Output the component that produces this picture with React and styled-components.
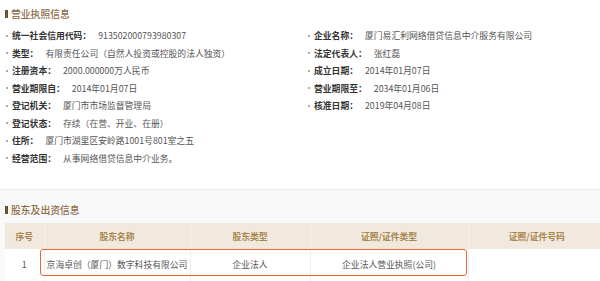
import React from "react";
import styled, { createGlobalStyle } from "styled-components";

const Global = createGlobalStyle`
  html, body { margin: 0; padding: 0; background: #fff; }
  body { font-family: "Noto Sans CJK SC", "Noto Sans", sans-serif; width: 600px; height: 281px; overflow: hidden; }
`;

const Page = styled.div`
  width: 600px;
  height: 281px;
  overflow: hidden;
`;

const License = styled.section`
  height: 190px;
  background: #fff;
  border-bottom: 1px solid #ececec;
  box-sizing: border-box;
  padding-top: 7px;
`;

const Title = styled.h2`
  margin: 0 0 0 5px;
  display: flex;
  align-items: center;
  gap: 3px;
  font-size: 9.8px;
  line-height: 14px;
  font-weight: 500;
  color: #8d6a48;
  &::before {
    content: "";
    width: 3px;
    height: 8px;
    background: #6e4f30;
  }
`;

const InfoGrid = styled.div`
  display: grid;
  grid-template-columns: 302px 298px;
  margin-top: 6px;
  padding-left: 6px;
`;

const Col = styled.div`
  display: flex;
  flex-direction: column;
`;

const Item = styled.div`
  display: flex;
  align-items: center;
  height: 17.5px;
  font-size: 8.8px;
  white-space: nowrap;
  &::before {
    content: "";
    width: 1.6px;
    height: 1.6px;
    border-radius: 50%;
    background: #9a9a9a;
    margin-right: 4.4px;
  }
`;

const Label = styled.span`
  font-weight: 700;
  color: #333;
  margin-right: 7px;
`;

const Value = styled.span`
  color: #555;
`;

const Holders = styled.section`
  background: #f9f9f9;
  padding-top: 13px;
  height: 91px;
  box-sizing: border-box;
`;

const TableWrap = styled.div`
  position: relative;
  margin: 6px 0 0 5px;
  width: 600px;
`;

const Table = styled.table`
  border-collapse: collapse;
  table-layout: fixed;
  width: 600px;
  font-size: 8.8px;
`;

const Th = styled.th`
  height: 26px;
  padding: 0;
  background: #f1e9dd;
  color: #a8874f;
  font-weight: 700;
  text-align: center;
  border-right: 1px solid #f8f3ec;
  &:last-child { border-right: none; }
`;

const Td = styled.td`
  height: 30px;
  padding: 0 0 3px;
  background: #fff;
  color: #555;
  text-align: center;
  border-right: 1px solid #efefef;
  &:last-child { border-right: none; }
`;

const Highlight = styled.div`
  position: absolute;
  left: 35px;
  top: 26px;
  width: 427px;
  height: 27px;
  box-sizing: border-box;
  border: 1.6px solid #e5683f;
  border-radius: 3px;
  pointer-events: none;
`;

const left = [
  ["统一社会信用代码：", "913502000793980307"],
  ["类型：", "有限责任公司（自然人投资或控股的法人独资）"],
  ["注册资本：", "2000.000000万人民币"],
  ["营业期限自：", "2014年01月07日"],
  ["登记机关：", "厦门市市场监督管理局"],
  ["登记状态：", "存续（在营、开业、在册）"],
  ["住所：", "厦门市湖里区安岭路1001号801室之五"],
  ["经营范围：", "从事网络借贷信息中介业务。"],
];

const right = [
  ["企业名称：", "厦门易汇利网络借贷信息中介服务有限公司"],
  ["法定代表人：", "张红磊"],
  ["成立日期：", "2014年01月07日"],
  ["营业期限至：", "2034年01月06日"],
  ["核准日期：", "2019年04月08日"],
];

const cols = [
  { name: "序号", w: 39 },
  { name: "股东名称", w: 146 },
  { name: "股东类型", w: 120 },
  { name: "证照/证件类型", w: 158 },
  { name: "证照/证件号码", w: 137 },
];

const row = ["1", "京海卓创（厦门）数字科技有限公司", "企业法人", "企业法人营业执照(公司)", ""];

export default function App() {
  return (
    <Page>
      <Global />
      <License>
        <Title>营业执照信息</Title>
        <InfoGrid>
          <Col>
            {left.map(([l, v]) => (
              <Item key={l}>
                <Label>{l}</Label>
                <Value>{v}</Value>
              </Item>
            ))}
          </Col>
          <Col>
            {right.map(([l, v]) => (
              <Item key={l}>
                <Label>{l}</Label>
                <Value>{v}</Value>
              </Item>
            ))}
          </Col>
        </InfoGrid>
      </License>
      <Holders>
        <Title>股东及出资信息</Title>
        <TableWrap>
          <Table>
            <colgroup>
              {cols.map((c) => (
                <col key={c.name} style={{ width: c.w }} />
              ))}
            </colgroup>
            <thead>
              <tr>
                {cols.map((c) => (
                  <Th key={c.name}>{c.name}</Th>
                ))}
              </tr>
            </thead>
            <tbody>
              <tr>
                {row.map((v, i) => (
                  <Td key={i}>{v}</Td>
                ))}
              </tr>
            </tbody>
          </Table>
          <Highlight />
        </TableWrap>
      </Holders>
    </Page>
  );
}
